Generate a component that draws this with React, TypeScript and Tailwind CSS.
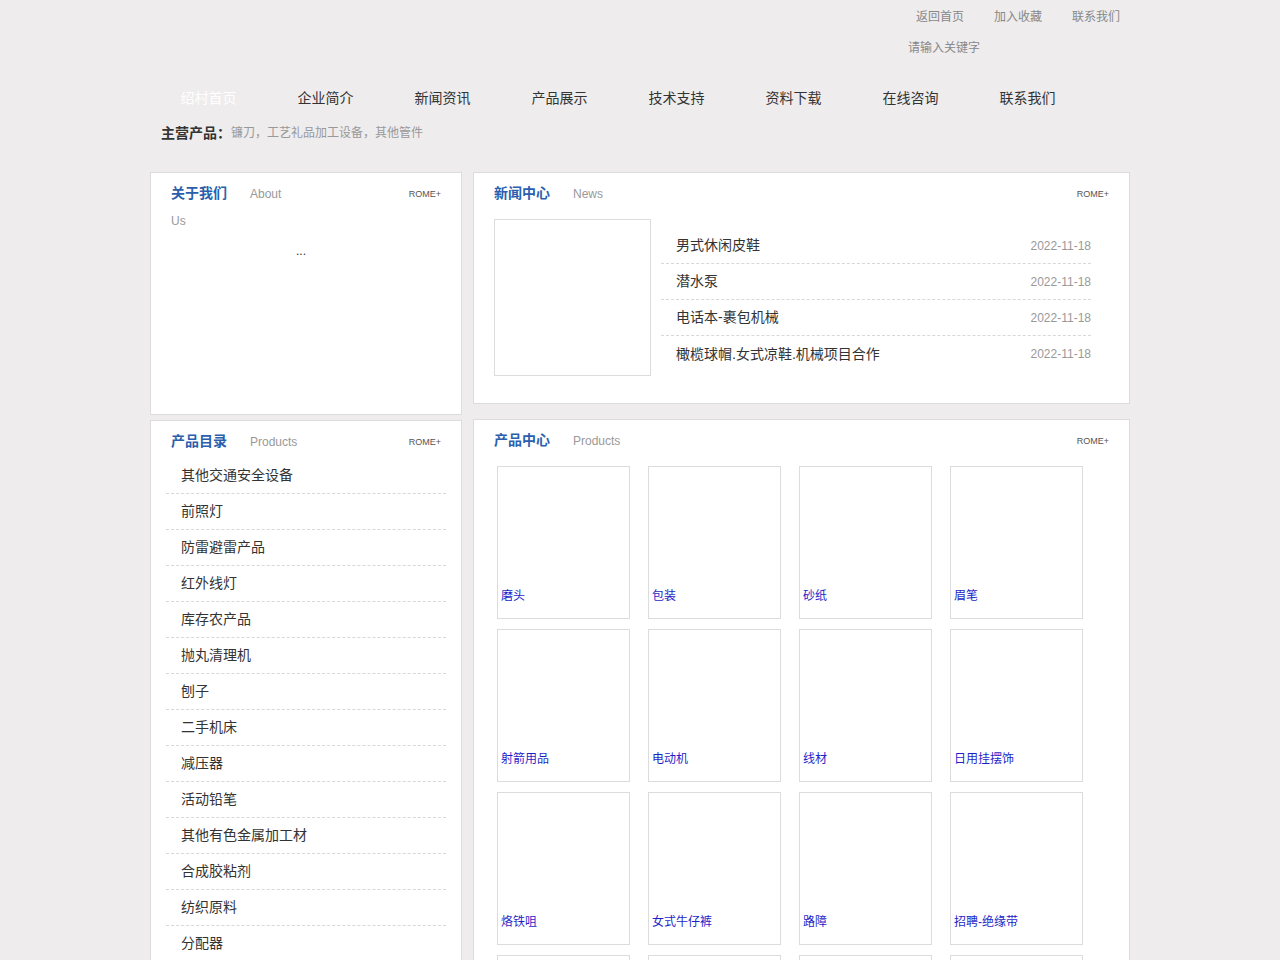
import type { ReactNode } from 'react';

const navItems = ['绍村首页', '企业简介', '新闻资讯', '产品展示', '技术支持', '资料下载', '在线咨询', '联系我们'];

const news = [
  { title: '男式休闲皮鞋', date: '2022-11-18' },
  { title: '潜水泵', date: '2022-11-18' },
  { title: '电话本-裹包机械', date: '2022-11-18' },
  { title: '橄榄球帽.女式凉鞋.机械项目合作', date: '2022-11-18' },
];

const categories = [
  '其他交通安全设备',
  '前照灯',
  '防雷避雷产品',
  '红外线灯',
  '库存农产品',
  '抛丸清理机',
  '刨子',
  '二手机床',
  '减压器',
  '活动铅笔',
  '其他有色金属加工材',
  '合成胶粘剂',
  '纺织原料',
  '分配器',
];

const products = [
  '磨头',
  '包装',
  '砂纸',
  '眉笔',
  '射箭用品',
  '电动机',
  '线材',
  '日用挂摆饰',
  '烙铁咀',
  '女式牛仔裤',
  '路障',
  '招聘-绝缘带',
  '轴承',
  '灯具',
  '五金工具',
  '包装材料',
];

function PanelHeader({ title, sub, wrap }: { title: string; sub: string; wrap?: boolean }) {
  return (
    <div className="flex items-start justify-between">
      <div className={wrap ? 'w-[125px] leading-[25px]' : 'leading-[25px]'}>
        <span className="mr-[23px] text-[14px] font-bold text-[#2b5fad]">{title}</span>
        <span className="text-[12px] text-[#999]">{sub}</span>
      </div>
      <span className="pt-[2px] text-[9px] leading-[25px] text-[#555]">ROME+</span>
    </div>
  );
}

function Panel({ className, children }: { className: string; children: ReactNode }) {
  return <section className={`border border-[#dcdcdc] bg-white ${className}`}>{children}</section>;
}

export default function App() {
  return (
    <div
      className="min-h-[960px] bg-[#eeeced] text-[#333]"
      style={{ fontFamily: '"Liberation Sans", Arial, "Noto Sans CJK SC", sans-serif' }}
    >
      <div className="mx-auto w-[980px]">
        {/* top links + search */}
        <div className="flex h-[33px] items-center justify-end gap-[30px] pr-[10px] text-[12px] text-[#888]">
          <span>返回首页</span>
          <span>加入收藏</span>
          <span>联系我们</span>
        </div>
        <div className="pl-[758px] pt-[6px] text-[12px] leading-[18px] text-[#888]">请输入关键字</div>

        {/* main nav */}
        <nav className="mt-[21px] flex h-[40px] items-center">
          {navItems.map((item, i) => (
            <span
              key={item}
              className={`w-[117px] text-center text-[14px] ${i === 0 ? 'text-white' : 'text-[#333]'}`}
            >
              {item}
            </span>
          ))}
        </nav>

        <div className="flex h-[30px] items-center pl-[11px]">
          <span className="text-[14px] font-bold text-[#333]">主营产品：</span>
          <span className="text-[12px] text-[#999]">镰刀，工艺礼品加工设备，其他管件</span>
        </div>

        <div className="mt-[24px] flex gap-[11px]">
          {/* left column */}
          <div className="flex w-[312px] flex-col gap-[5px]">
            <Panel className="h-[243px] px-[20px] pt-[7px]">
              <PanelHeader title="关于我们" sub="About Us" wrap />
              <p className="mt-[8px] pr-[10px] text-center text-[12px] text-[#333]">...</p>
            </Panel>

            <Panel className="h-[560px] pt-[7px]">
              <div className="px-[20px]">
                <PanelHeader title="产品目录" sub="Products" />
              </div>
              <ul className="mx-[15px] mt-[3px]">
                {categories.map((c) => (
                  <li
                    key={c}
                    className="flex h-[36px] items-center border-b border-dashed border-[#d8d8d8] pl-[15px] text-[14px] text-[#333]"
                  >
                    {c}
                  </li>
                ))}
              </ul>
            </Panel>
          </div>

          {/* right column */}
          <div className="flex w-[657px] flex-col gap-[15px]">
            <Panel className="h-[232px] px-[20px] pt-[7px]">
              <PanelHeader title="新闻中心" sub="News" />
              <div className="mt-[12px] flex">
                <div className="h-[157px] w-[157px] shrink-0 border border-[#dcdcdc]" />
                <ul className="ml-[10px] mt-[9px] w-[430px]">
                  {news.map((n, i) => (
                    <li
                      key={n.title}
                      className={`flex h-[36px] items-center justify-between pl-[15px] ${
                        i < news.length - 1 ? 'border-b border-dashed border-[#d8d8d8]' : ''
                      }`}
                    >
                      <span className="text-[14px] text-[#333]">{n.title}</span>
                      <span className="text-[12px] text-[#999]">{n.date}</span>
                    </li>
                  ))}
                </ul>
              </div>
            </Panel>

            <Panel className="h-[560px] pt-[7px]">
              <div className="px-[20px]">
                <PanelHeader title="产品中心" sub="Products" />
              </div>
              <div className="ml-[23px] mt-[12px] grid w-[586px] grid-cols-[repeat(4,133px)] gap-x-[18px] gap-y-[10px]">
                {products.map((p) => (
                  <div
                    key={p}
                    className="flex h-[153px] flex-col justify-end border border-[#dcdcdc] pb-[15px] pl-[3px]"
                  >
                    <span className="text-[12px] leading-[14px] text-[#1f1fc8]">{p}</span>
                  </div>
                ))}
              </div>
            </Panel>
          </div>
        </div>
      </div>
    </div>
  );
}
